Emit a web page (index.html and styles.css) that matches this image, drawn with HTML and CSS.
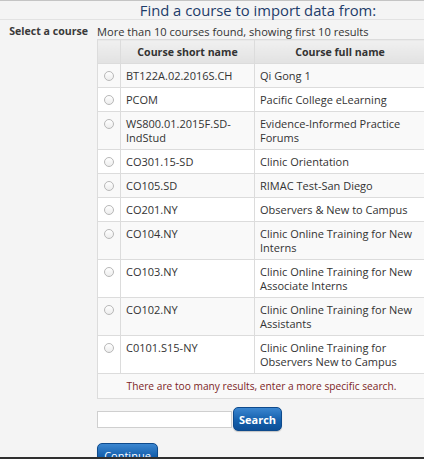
FILE: index.html
```html
<!DOCTYPE html>
<html>
<head>
<meta charset="utf-8">
<link rel="stylesheet" href="styles.css">
</head>
<body>
<div class="page">
  <div class="legend">Find a course to import data from:</div>
  <div class="form-row">
    <div class="label">Select a course</div>
    <div class="content">
      <div class="note">More than 10 courses found, showing first 10 results</div>
      <table class="courses">
        <thead>
          <tr><th class="c-radio"></th><th class="c-short">Course short name</th><th class="c-full">Course full name</th></tr>
        </thead>
        <tbody>
          <tr><td class="c-radio"><input type="radio" name="c"></td><td>BT122A.02.2016S.CH</td><td>Qi Gong 1</td></tr>
          <tr><td class="c-radio"><input type="radio" name="c"></td><td>PCOM</td><td>Pacific College eLearning</td></tr>
          <tr><td class="c-radio"><input type="radio" name="c"></td><td>WS800.01.2015F.SD-<br>IndStud</td><td>Evidence-Informed Practice<br>Forums</td></tr>
          <tr><td class="c-radio"><input type="radio" name="c"></td><td>CO301.15-SD</td><td>Clinic Orientation</td></tr>
          <tr><td class="c-radio"><input type="radio" name="c"></td><td>CO105.SD</td><td>RIMAC Test-San Diego</td></tr>
          <tr><td class="c-radio"><input type="radio" name="c"></td><td>CO201.NY</td><td>Observers &amp; New to Campus</td></tr>
          <tr><td class="c-radio"><input type="radio" name="c"></td><td>CO104.NY</td><td>Clinic Online Training for New<br>Interns</td></tr>
          <tr><td class="c-radio"><input type="radio" name="c"></td><td>CO103.NY</td><td>Clinic Online Training for New<br>Associate Interns</td></tr>
          <tr><td class="c-radio"><input type="radio" name="c"></td><td>CO102.NY</td><td>Clinic Online Training for New<br>Assistants</td></tr>
          <tr><td class="c-radio"><input type="radio" name="c"></td><td>C0101.S15-NY</td><td>Clinic Online Training for<br>Observers New to Campus</td></tr>
          <tr class="msg-row"><td colspan="3">There are too many results, enter a more specific search.</td></tr>
        </tbody>
      </table>
      <div class="search">
        <input type="text" class="search-input">
        <button class="btn btn-search">Search</button>
      </div>
      <button class="btn btn-continue">Continue</button>
    </div>
  </div>
</div>
</body>
</html>
```
FILE: styles.css
```css
html, body {
  margin: 0;
  padding: 0;
  overflow: hidden;
}
body {
  background: #f4f4f4;
  font-family: "Open Sans", "DejaVu Sans", sans-serif;
  font-size: 11px;
  color: #333;
}
.page {
  height: 459px;
  overflow: hidden;
  border-top: 1px solid #c4c4c4;
  border-bottom: 2px solid #2f2f2f;
  box-sizing: border-box;
}
.legend {
  height: 18px;
  line-height: 18px;
  padding-left: 92px;
  text-align: center;
  font-size: 14.8px;
  color: #1d3c6a;
  border-bottom: 1px solid #e2e2e2;
}
.form-row {
  display: flex;
  padding-top: 4px;
}
.label {
  width: 88px;
  flex: none;
  text-align: right;
  font-weight: bold;
  font-size: 10.6px;
  line-height: 15px;
  padding-right: 9px;
  color: #3a3a3a;
}
.content {
  flex: none;
  width: 329px;
}
.note {
  line-height: 15px;
  margin-bottom: 0;
  font-size: 11.1px;
}
.courses {
  width: 329px;
  border-collapse: collapse;
  table-layout: fixed;
}
.courses th, .courses td {
  border: 1px solid #dcdcdc;
  padding: 5px 5px 4px;
  line-height: 14px;
  vertical-align: top;
  text-align: left;
  white-space: nowrap;
}
.courses th {
  background: linear-gradient(#f0f0f0, #e2e2e2);
  text-align: center;
  font-weight: bold;
  font-size: 10.6px;
  color: #333;
}
.courses th.c-radio, .courses td.c-radio {
  width: 12px;
  padding-left: 5px;
  padding-right: 5px;
}
.courses th.c-short { width: 123px; }
.courses tbody tr:nth-child(odd) { background: #f9f9f9; }
.courses tbody tr:nth-child(even) { background: #fff; }
.courses input[type=radio] {
  appearance: none;
  -webkit-appearance: none;
  width: 10px;
  height: 10px;
  margin: 2px 0 0 1px;
  border: 1px solid #b8b8b8;
  border-radius: 50%;
  background: linear-gradient(#fff, #ededed);
  display: block;
}
.courses tr.msg-row td {
  text-align: center;
  color: #7d1f1f;
  font-size: 10.2px;
  padding: 5px 5px 5px;
  background: #f9f9f9;
}
.search {
  display: flex;
  align-items: center;
  margin-top: 8px;
}
.search-input {
  width: 135px;
  height: 17px;
  box-sizing: border-box;
  border: 1px solid #cfcfcf;
  background: #fff;
  margin: 0;
  padding: 0 3px;
}
.btn {
  font-family: "Open Sans", "DejaVu Sans", sans-serif;
  font-size: 11px;
  font-weight: bold;
  color: #fff;
  border: 1px solid #0e4a8c;
  border-radius: 5px;
  background: linear-gradient(#3b86d0, #1560ad 55%, #0d4f97);
  margin: 0;
  padding: 0;
  box-shadow: 0 1px 1px rgba(0,0,0,0.2);
}
.btn-search {
  width: 49px;
  height: 24px;
  margin-left: 1px;
}
.btn-continue {
  display: block;
  width: 61px;
  height: 24px;
  margin-top: 12px;
  font-weight: normal;
}
```
